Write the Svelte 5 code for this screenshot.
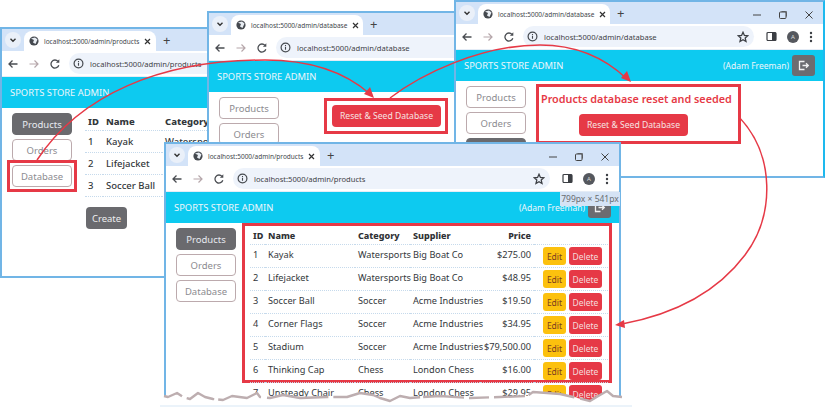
<script>
  const products = [
    ['1', 'Kayak', 'Watersports', 'Big Boat Co', '$275.00'],
    ['2', 'Lifejacket', 'Watersports', 'Big Boat Co', '$48.95'],
    ['3', 'Soccer Ball', 'Soccer', 'Acme Industries', '$19.50'],
    ['4', 'Corner Flags', 'Soccer', 'Acme Industries', '$34.95'],
    ['5', 'Stadium', 'Soccer', 'Acme Industries', '$79,500.00'],
    ['6', 'Thinking Cap', 'Chess', 'London Chess', '$16.00'],
    ['7', 'Unsteady Chair', 'Chess', 'London Chess', '$29.95']
  ]

  // torn edge along the bottom of the front window
  const tear = '164,396 168,397 177,393 183,397 190,399 198,393 205,397 213,399 223,400 232,396 247,398 257,393 260,397 270,398 283,395 300,398 327,397 347,397 360,393 373,395 380,398 390,401 400,396 410,398 423,397 440,396 470,398 500,397 527,396 533,392 547,393 560,394 573,397 590,401 600,395 607,391 613,396 622,397'
</script>

{#snippet browser(cls, url, body)}
  <section class={`window ${cls}`}>
    <div class="strip">
      <span class="tab-menu">
        <svg width="8" height="8" viewBox="0 0 8 8"><path d="M1.5 2.8 4 5.3l2.5-2.5" fill="none" stroke="#333" stroke-width="1.4" /></svg>
      </span>
      <div class="tab">
        <svg width="10" height="10" viewBox="0 0 10 10"><circle cx="5" cy="5" r="4.6" fill="#45494f" /><path d="M2 2.5 5 4 4 6.5 6.5 8 8.5 3.5 6 1.5" fill="#e8edf3" /></svg>
        <span class="tab-title">{url}</span>
        <svg width="7" height="7" viewBox="0 0 7 7"><path d="M1 1l5 5m0-5-5 5" stroke="#333" stroke-width="1.2" /></svg>
      </div>
      <span class="new-tab">+</span>
      <div class="controls">
        <svg width="10" height="10" viewBox="0 0 10 10"><path d="M1 5h8" stroke="#444" stroke-width="1" /></svg>
        <svg width="10" height="10" viewBox="0 0 10 10"><rect x="1.5" y="2" width="6.5" height="6.5" rx="1" fill="none" stroke="#444" /><path d="M3.5 1.5h5v5" fill="none" stroke="#444" stroke-width=".7" /></svg>
        <svg width="10" height="10" viewBox="0 0 10 10"><path d="M1.5 1.5l7 7m0-7-7 7" stroke="#444" stroke-width="1" /></svg>
      </div>
    </div>
    <div class="toolbar">
      <svg class="nav-icon" width="12" height="12" viewBox="0 0 12 12"><path d="M10.5 6H2m3.5-3.5L2 6l3.5 3.5" fill="none" stroke="#4a4d52" stroke-width="1.3" /></svg>
      <svg class="nav-icon" width="12" height="12" viewBox="0 0 12 12"><path d="M1.5 6H10M6.5 2.5 10 6 6.5 9.5" fill="none" stroke="#b5a6aa" stroke-width="1.2" /></svg>
      <svg class="nav-icon" width="12" height="12" viewBox="0 0 12 12"><path d="M9.8 7.2A4 4 0 1 1 9 3.4" fill="none" stroke="#4a4d52" stroke-width="1.3" /><path d="M10.3 1.3v3.4H6.9z" fill="#4a4d52" /></svg>
      <div class="address">
        <svg width="11" height="11" viewBox="0 0 11 11"><circle cx="5.5" cy="5.5" r="4.4" fill="none" stroke="#45494f" stroke-width="1.2" /><path d="M5.5 4.8v3M5.5 3v1" stroke="#45494f" stroke-width="1.1" /></svg>
        <span class="url">{url}</span>
        <svg class="star" width="12" height="12" viewBox="0 0 12 12"><path d="M6 1.3 7.4 4.5l3.4.3-2.6 2.3.8 3.4L6 8.7l-3 1.8.8-3.4-2.6-2.3 3.4-.3z" fill="none" stroke="#3c3f44" stroke-width="1.3" /></svg>
      </div>
      <div class="tools">
        <svg width="11" height="11" viewBox="0 0 11 11"><rect x="1" y="1.5" width="9" height="8" rx="1" fill="none" stroke="#3c3f44" stroke-width="1.2" /><rect x="6" y="1.5" width="4" height="8" fill="#3c3f44" /></svg>
        <span class="avatar">A</span>
        <svg width="4" height="12" viewBox="0 0 4 12"><circle cx="2" cy="2" r="1.2" fill="#3c3f44" /><circle cx="2" cy="6" r="1.2" fill="#3c3f44" /><circle cx="2" cy="10" r="1.2" fill="#3c3f44" /></svg>
      </div>
    </div>
    <header class="navbar">
      <span class="brand">SPORTS STORE ADMIN</span>
      <span class="user">(Adam Freeman)</span>
      <button class="logout" aria-label="Log out">
        <svg width="12" height="11" viewBox="0 0 12 11"><path d="M6.5 1.5H1.5v8h5" fill="none" stroke="#f1f1f1" stroke-width="1.3" /><path d="M4.5 5.5h5.5M8 3.3l2.3 2.2L8 7.7" fill="none" stroke="#f1f1f1" stroke-width="1.3" /></svg>
      </button>
    </header>
    <div class="content">
      {@render body()}
    </div>
  </section>
{/snippet}

{#snippet sidebar(active, marked)}
  <nav class="sidebar">
    {#each ['Products', 'Orders', 'Database'] as item}
      <button class="side-btn" class:active={item === active} class:marked={item === marked}>{item}</button>
    {/each}
  </nav>
{/snippet}

{#snippet firstBody()}
  {@render sidebar('Products', 'Database')}
  <div class="list">
    <table class="small-table">
      <thead><tr><th class="c-id">ID</th><th class="c-name">Name</th><th>Category</th></tr></thead>
      <tbody>
        {#each products.slice(0, 3) as row}
          <tr><td>{row[0]}</td><td>{row[1]}</td><td>{row[2]}</td></tr>
        {/each}
      </tbody>
    </table>
    <button class="create">Create</button>
  </div>
{/snippet}

{#snippet secondBody()}
  {@render sidebar('', '')}
  <div class="marked-box seed-box">
    <button class="seed">Reset &amp; Seed Database</button>
  </div>
{/snippet}

{#snippet thirdBody()}
  {@render sidebar('Database', '')}
  <div class="marked-box done-box">
    <h2>Products database reset and seeded</h2>
    <button class="seed">Reset &amp; Seed Database</button>
  </div>
{/snippet}

{#snippet fourthBody()}
  {@render sidebar('Products', '')}
  <div class="marked-box table-box">
    <table class="full-table">
      <thead>
        <tr>
          <th class="f-id">ID</th><th class="f-name">Name</th><th class="f-cat">Category</th>
          <th class="f-sup">Supplier</th><th class="f-price">Price</th><th></th>
        </tr>
      </thead>
      <tbody>
        {#each products as row}
          <tr>
            <td>{row[0]}</td><td>{row[1]}</td><td>{row[2]}</td><td>{row[3]}</td>
            <td class="f-price">{row[4]}</td>
            <td class="actions"><button class="edit">Edit</button><button class="delete">Delete</button></td>
          </tr>
        {/each}
      </tbody>
    </table>
  </div>
{/snippet}

<main class="canvas">
  {@render browser('w-first', 'localhost:5000/admin/products', firstBody)}
  {@render browser('w-second', 'localhost:5000/admin/database', secondBody)}
  {@render browser('w-third', 'localhost:5000/admin/database', thirdBody)}
  {@render browser('w-fourth', 'localhost:5000/admin/products', fourthBody)}

  <div class="size-tip">799px × 541px</div>

  <svg class="overlay" width="825" height="407" viewBox="0 0 825 407">
    <polygon points={`${tear} 640,397 640,407 164,407`} fill="#fff" />
    <polyline points={tear} fill="none" stroke="#bdaeb0" stroke-width="2.4" stroke-linejoin="round" stroke-dasharray="20 5 31 4 47 6 62 5 90 3 41 5" />
    <path d="M160 406H632" stroke="#d8e7f6" stroke-width="1.2" />
    <g fill="none" stroke="#e63946" stroke-width="1.5">
      <path d="M37 160C80 95 160 60 265 60 310 60 345 72 370 94" />
      <path d="M390 98C420 75 480 45 540 45 575 45 605 58 627 79" />
      <path d="M739 117C775 155 775 215 745 255 715 295 670 315 622 324" />
    </g>
    <g fill="#e63946">
      <path d="M374 98 364 94 370 87z" />
      <path d="M631 82 621 78 627 71z" />
      <path d="M615 325 624 320 625 328z" />
    </g>
  </svg>
</main>

<style>
  :global(body) { margin: 0; background: #fff; }

  .canvas {
    position: relative;
    width: 825px;
    height: 407px;
    overflow: hidden;
    background: #fff;
    font-family: "Noto Sans", "Open Sans", sans-serif;
    color: #33373b;
  }

  .window {
    position: absolute;
    display: flex;
    flex-direction: column;
    box-sizing: border-box;
    overflow: hidden;
    background: #fff;
    border: 2px solid #71b5e6;
  }
  .w-first { left: 0; top: 27px; width: 400px; height: 251px; }
  .w-second { left: 207px; top: 11px; width: 400px; height: 140px; }
  .w-third { left: 454px; top: 0; width: 371px; height: 178px; border-right-color: #1db9ee; }
  .w-fourth { left: 164px; top: 142px; width: 457px; height: 262px; }

  .strip {
    flex: none;
    display: flex;
    align-items: flex-end;
    height: 22px;
    padding-left: 3px;
    background: #d3e3f8;
  }
  .tab-menu {
    display: grid;
    place-items: center;
    width: 16px;
    height: 16px;
    margin: 0 3px 3px 0;
    border-radius: 50%;
    background: #eaf0f9;
  }
  .tab {
    display: flex;
    align-items: center;
    gap: 5px;
    box-sizing: border-box;
    width: 132px;
    height: 20px;
    padding: 0 6px 0 5px;
    background: #fff;
    border-radius: 8px 8px 0 0;
    font-size: 6.5px;
    color: #44474c;
  }
  .tab svg { flex: none; }
  .tab-title { flex: 1; white-space: nowrap; }
  .new-tab { margin: 0 0 3px 7px; font-size: 13px; line-height: 16px; color: #444; }
  .controls {
    display: flex;
    gap: 16px;
    margin: 0 9px 4px auto;
  }

  .toolbar {
    flex: none;
    display: flex;
    align-items: center;
    height: 26px;
    padding-left: 5px;
    border-bottom: 1px solid #e4ecf6;
    box-sizing: border-box;
  }
  .nav-icon { margin-right: 9px; flex: none; }
  .address {
    flex: 1;
    display: flex;
    align-items: center;
    gap: 6px;
    height: 21px;
    margin-left: -1px;
    padding: 0 5px 0 4px;
    background: #eef3fb;
    border-radius: 11px;
    font-size: 7.6px;
    color: #3f4247;
    min-width: 0;
  }
  .url { flex: 1; white-space: nowrap; }
  .tools {
    flex: none;
    display: flex;
    align-items: center;
    justify-content: space-between;
    box-sizing: border-box;
    width: 69px;
    padding: 0 10px 0 12px;
  }
  .avatar {
    display: grid;
    place-items: center;
    width: 12px;
    height: 12px;
    border-radius: 50%;
    background: #55585e;
    color: #ddd;
    font-size: 6px;
  }

  .navbar {
    flex: none;
    display: flex;
    align-items: center;
    height: 31px;
    padding: 0 8px;
    background: #0dcaf0;
    color: #eef6fb;
    font-size: 9.4px;
  }
  .brand { flex: 1; white-space: nowrap; }
  .user { margin-right: 3px; white-space: nowrap; font-size: 8.5px; }
  .logout {
    display: grid;
    place-items: center;
    width: 23px;
    height: 21px;
    padding: 0;
    border: 0;
    border-radius: 3px;
    background: #6c6c70;
  }

  .content {
    flex: 1;
    display: flex;
    align-items: flex-start;
    padding: 5px 0 0 10px;
    min-height: 0;
  }
  .sidebar {
    flex: none;
    display: flex;
    flex-direction: column;
    gap: 4px;
    width: 60px;
  }
  button { font-family: inherit; }
  .side-btn {
    position: relative;
    height: 22px;
    padding: 0;
    background: #fff;
    border: 1.5px solid #bcaaad;
    border-radius: 4px;
    color: #8c8b90;
    font-size: 9.5px;
  }
  .side-btn.active {
    background: #6a6a6e;
    border-color: #6a6a6e;
    color: #e8eaf0;
  }
  .side-btn.marked::after {
    content: '';
    position: absolute;
    inset: -6px;
    border: 3px solid #e63946;
  }

  .list { flex: 1; margin-left: 13px; min-width: 0; }
  table { border-collapse: collapse; table-layout: fixed; }
  th, td { text-align: left; padding: 0 3px; white-space: nowrap; }
  tr { border-bottom: 1px dotted #c6daec; }
  .small-table { width: 260px; font-size: 9.5px; }
  .small-table th { height: 17px; font-size: 9.5px; font-weight: 800; }
  .small-table td { height: 21px; font-weight: 500; }
  .c-id { width: 12px; }
  .c-name { width: 53px; }
  .create {
    display: block;
    width: 41px;
    height: 22px;
    margin: 10px 0 0 1px;
    padding: 0;
    background: #6a6a6e;
    border: 0;
    border-radius: 4px;
    color: #eee;
    font-size: 9.5px;
  }

  .marked-box {
    box-sizing: border-box;
    border: 3px solid #e63946;
    background: #fff;
  }
  .seed {
    display: block;
    width: 109px;
    height: 22px;
    padding: 0;
    background: #e63946;
    border: 0;
    border-radius: 4px;
    color: #f6e3e3;
    font-size: 8.6px;
  }
  .seed-box { margin: 1px 0 0 45px; padding: 4px 4px 4px 5px; }
  .done-box { width: 205px; height: 60px; margin: -2px 0 0 10px; padding: 0 0 0 2px; }
  .done-box h2 {
    margin: 3px 0 7px;
    font-size: 10.8px;
    line-height: 17px;
    font-weight: 600;
    color: #e63946;
    white-space: nowrap;
  }
  .done-box .seed { margin-left: 38px; }

  .table-box { flex: none; width: 370px; height: 160px; margin: -5px 0 0 6px; padding: 0 0 0 5px; }
  .full-table { width: 358px; font-size: 9.2px; }
  .full-table th { height: 18px; font-size: 9px; font-weight: 800; color: #2f3135; }
  .full-table td { height: 19px; padding-bottom: 3px; }
  .f-id { width: 9px; }
  .f-name { width: 84px; }
  .f-cat { width: 49px; }
  .f-sup { width: 64px; }
  .f-price { width: 48px; text-align: right; }
  .full-table td.actions { padding: 0 0 0 9px; }
  .actions button {
    height: 18px;
    padding: 0;
    border: 0;
    border-radius: 3px;
    font-size: 8.5px;
    vertical-align: middle;
  }
  .edit { width: 23px; background: #fcc10e; color: #7a3d20; }
  .delete { width: 33px; margin-left: 3px; background: #e63946; color: #f4dcdc; }

  .size-tip {
    position: absolute;
    left: 560px;
    top: 192px;
    width: 60px;
    height: 14px;
    background: #d5e3f5;
    color: #6a6d72;
    font-size: 8.5px;
    line-height: 14px;
    text-align: center;
    white-space: nowrap;
  }
  .overlay { position: absolute; left: 0; top: 0; pointer-events: none; }
</style>
